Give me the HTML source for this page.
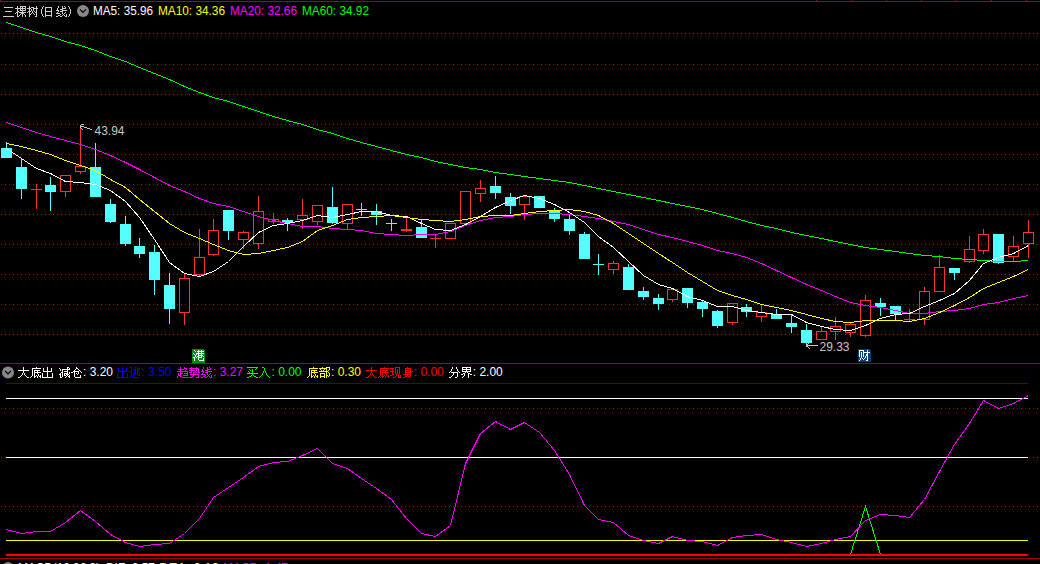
<!DOCTYPE html>
<html><head><meta charset="utf-8"><style>
html,body{margin:0;padding:0;background:#000;width:1040px;height:564px;overflow:hidden}
svg{display:block}
text{font-family:"Liberation Sans",sans-serif}
</style></head><body>
<svg width="1040" height="564" viewBox="0 0 1040 564" shape-rendering="crispEdges" font-family="Liberation Sans, sans-serif">
<rect x="0" y="0" width="1040" height="564" fill="#000"/>
<rect x="0" y="1" width="1040" height="1" fill="#b00000"/>
<rect x="0" y="0" width="1" height="2" fill="#b00000"/>
<rect x="23" y="0" width="1" height="2" fill="#b00000"/>
<rect x="816" y="0" width="1" height="2" fill="#b00000"/>
<rect x="851" y="0" width="1" height="2" fill="#b00000"/>
<rect x="886" y="0" width="1" height="2" fill="#b00000"/>
<rect x="921" y="0" width="1" height="2" fill="#b00000"/>
<rect x="956" y="0" width="1" height="2" fill="#b00000"/>
<rect x="991" y="0" width="1" height="2" fill="#b00000"/>
<rect x="1026" y="0" width="1" height="2" fill="#b00000"/>
<rect x="0" y="363" width="1040" height="1" fill="#b00000"/>
<rect x="0" y="558" width="1040" height="1" fill="#b00000"/>
<line x1="1" y1="33.5" x2="1040" y2="33.5" stroke="#c80000" stroke-width="1" stroke-dasharray="1 3"/>
<line x1="1" y1="64.5" x2="1040" y2="64.5" stroke="#c80000" stroke-width="1" stroke-dasharray="1 3"/>
<line x1="1" y1="94.5" x2="1040" y2="94.5" stroke="#c80000" stroke-width="1" stroke-dasharray="1 3"/>
<line x1="1" y1="124.5" x2="1040" y2="124.5" stroke="#c80000" stroke-width="1" stroke-dasharray="1 3"/>
<line x1="1" y1="154.5" x2="1040" y2="154.5" stroke="#c80000" stroke-width="1" stroke-dasharray="1 3"/>
<line x1="1" y1="184.5" x2="1040" y2="184.5" stroke="#c80000" stroke-width="1" stroke-dasharray="1 3"/>
<line x1="1" y1="214.5" x2="1040" y2="214.5" stroke="#c80000" stroke-width="1" stroke-dasharray="1 3"/>
<line x1="1" y1="244.5" x2="1040" y2="244.5" stroke="#c80000" stroke-width="1" stroke-dasharray="1 3"/>
<line x1="1" y1="274.5" x2="1040" y2="274.5" stroke="#c80000" stroke-width="1" stroke-dasharray="1 3"/>
<line x1="1" y1="304.5" x2="1040" y2="304.5" stroke="#c80000" stroke-width="1" stroke-dasharray="1 3"/>
<line x1="1" y1="334.5" x2="1040" y2="334.5" stroke="#c80000" stroke-width="1" stroke-dasharray="1 3"/>
<line x1="1" y1="408.5" x2="1040" y2="408.5" stroke="#c80000" stroke-width="1" stroke-dasharray="1 3"/>
<line x1="1" y1="457.5" x2="1040" y2="457.5" stroke="#c80000" stroke-width="1" stroke-dasharray="1 3"/>
<line x1="1" y1="506.5" x2="1040" y2="506.5" stroke="#c80000" stroke-width="1" stroke-dasharray="1 3"/>
<rect x="1" y="148" width="11" height="10" fill="#54ffff"/>
<rect x="6" y="142" width="1" height="6" fill="#54ffff"/>
<rect x="16" y="167" width="11" height="22" fill="#54ffff"/>
<rect x="21" y="158" width="1" height="9" fill="#54ffff"/>
<rect x="21" y="189" width="1" height="10" fill="#54ffff"/>
<rect x="31" y="189" width="11" height="1" fill="#ff3232"/>
<rect x="36" y="184" width="1" height="25" fill="#ff3232"/>
<rect x="45" y="185" width="11" height="7" fill="#54ffff"/>
<rect x="50" y="177" width="1" height="8" fill="#54ffff"/>
<rect x="50" y="192" width="1" height="19" fill="#54ffff"/>
<rect x="60.5" y="175.5" width="10" height="16" fill="none" stroke="#ff3232" stroke-width="1"/>
<rect x="65" y="192" width="1" height="5" fill="#ff3232"/>
<rect x="75.5" y="166.5" width="10" height="5" fill="none" stroke="#ff3232" stroke-width="1"/>
<rect x="80" y="125" width="1" height="41" fill="#ff3232"/>
<rect x="80" y="172" width="1" height="2" fill="#ff3232"/>
<rect x="90" y="167" width="11" height="30" fill="#54ffff"/>
<rect x="95" y="143" width="1" height="24" fill="#54ffff"/>
<rect x="105" y="204" width="11" height="18" fill="#54ffff"/>
<rect x="110" y="199" width="1" height="5" fill="#54ffff"/>
<rect x="110" y="222" width="1" height="1" fill="#54ffff"/>
<rect x="120" y="224" width="11" height="20" fill="#54ffff"/>
<rect x="125" y="216" width="1" height="8" fill="#54ffff"/>
<rect x="125" y="244" width="1" height="2" fill="#54ffff"/>
<rect x="134" y="246" width="11" height="8" fill="#54ffff"/>
<rect x="139" y="238" width="1" height="8" fill="#54ffff"/>
<rect x="139" y="254" width="1" height="4" fill="#54ffff"/>
<rect x="149" y="252" width="11" height="28" fill="#54ffff"/>
<rect x="154" y="245" width="1" height="7" fill="#54ffff"/>
<rect x="154" y="280" width="1" height="15" fill="#54ffff"/>
<rect x="164" y="285" width="11" height="24" fill="#54ffff"/>
<rect x="169" y="273" width="1" height="12" fill="#54ffff"/>
<rect x="169" y="309" width="1" height="15" fill="#54ffff"/>
<rect x="179.5" y="278.5" width="10" height="34" fill="none" stroke="#ff3232" stroke-width="1"/>
<rect x="184" y="274" width="1" height="4" fill="#ff3232"/>
<rect x="184" y="313" width="1" height="12" fill="#ff3232"/>
<rect x="194.5" y="257.5" width="10" height="17" fill="none" stroke="#ff3232" stroke-width="1"/>
<rect x="199" y="229" width="1" height="28" fill="#ff3232"/>
<rect x="199" y="275" width="1" height="2" fill="#ff3232"/>
<rect x="208.5" y="230.5" width="10" height="24" fill="none" stroke="#ff3232" stroke-width="1"/>
<rect x="213" y="219" width="1" height="11" fill="#ff3232"/>
<rect x="213" y="255" width="1" height="1" fill="#ff3232"/>
<rect x="223" y="210" width="11" height="21" fill="#54ffff"/>
<rect x="228" y="231" width="1" height="9" fill="#54ffff"/>
<rect x="238.5" y="232.5" width="10" height="7" fill="none" stroke="#ff3232" stroke-width="1"/>
<rect x="243" y="231" width="1" height="1" fill="#ff3232"/>
<rect x="243" y="240" width="1" height="9" fill="#ff3232"/>
<rect x="253.5" y="211.5" width="10" height="32" fill="none" stroke="#ff3232" stroke-width="1"/>
<rect x="258" y="196" width="1" height="15" fill="#ff3232"/>
<rect x="258" y="244" width="1" height="5" fill="#ff3232"/>
<rect x="268.5" y="219.5" width="10" height="2" fill="none" stroke="#ff3232" stroke-width="1"/>
<rect x="273" y="213" width="1" height="6" fill="#ff3232"/>
<rect x="273" y="222" width="1" height="2" fill="#ff3232"/>
<rect x="282" y="220" width="11" height="3" fill="#54ffff"/>
<rect x="287" y="218" width="1" height="2" fill="#54ffff"/>
<rect x="287" y="223" width="1" height="8" fill="#54ffff"/>
<rect x="297.5" y="215.5" width="10" height="4" fill="none" stroke="#ff3232" stroke-width="1"/>
<rect x="302" y="199" width="1" height="16" fill="#ff3232"/>
<rect x="302" y="220" width="1" height="9" fill="#ff3232"/>
<rect x="312.5" y="205.5" width="10" height="16" fill="none" stroke="#ff3232" stroke-width="1"/>
<rect x="317" y="222" width="1" height="3" fill="#ff3232"/>
<rect x="327" y="207" width="11" height="16" fill="#54ffff"/>
<rect x="332" y="187" width="1" height="20" fill="#54ffff"/>
<rect x="332" y="223" width="1" height="1" fill="#54ffff"/>
<rect x="342.5" y="204.5" width="10" height="19" fill="none" stroke="#ff3232" stroke-width="1"/>
<rect x="347" y="224" width="1" height="5" fill="#ff3232"/>
<rect x="356" y="209" width="11" height="1" fill="#54ffff"/>
<rect x="361" y="203" width="1" height="13" fill="#54ffff"/>
<rect x="371" y="211" width="11" height="4" fill="#54ffff"/>
<rect x="376" y="204" width="1" height="7" fill="#54ffff"/>
<rect x="376" y="215" width="1" height="10" fill="#54ffff"/>
<rect x="386" y="223" width="11" height="1" fill="#54ffff"/>
<rect x="391" y="219" width="1" height="12" fill="#54ffff"/>
<rect x="401.5" y="229.5" width="10" height="1" fill="none" stroke="#ff3232" stroke-width="1"/>
<rect x="406" y="218" width="1" height="11" fill="#ff3232"/>
<rect x="406" y="231" width="1" height="1" fill="#ff3232"/>
<rect x="416" y="227" width="11" height="11" fill="#54ffff"/>
<rect x="421" y="220" width="1" height="7" fill="#54ffff"/>
<rect x="430" y="238" width="11" height="1" fill="#ff3232"/>
<rect x="435" y="234" width="1" height="14" fill="#ff3232"/>
<rect x="445.5" y="223.5" width="10" height="15" fill="none" stroke="#ff3232" stroke-width="1"/>
<rect x="460.5" y="191.5" width="10" height="32" fill="none" stroke="#ff3232" stroke-width="1"/>
<rect x="465" y="224" width="1" height="1" fill="#ff3232"/>
<rect x="475.5" y="188.5" width="10" height="5" fill="none" stroke="#ff3232" stroke-width="1"/>
<rect x="480" y="180" width="1" height="8" fill="#ff3232"/>
<rect x="480" y="194" width="1" height="8" fill="#ff3232"/>
<rect x="490" y="186" width="11" height="7" fill="#54ffff"/>
<rect x="495" y="176" width="1" height="10" fill="#54ffff"/>
<rect x="495" y="193" width="1" height="6" fill="#54ffff"/>
<rect x="505" y="197" width="11" height="9" fill="#54ffff"/>
<rect x="510" y="193" width="1" height="4" fill="#54ffff"/>
<rect x="510" y="206" width="1" height="8" fill="#54ffff"/>
<rect x="519.5" y="196.5" width="10" height="8" fill="none" stroke="#ff3232" stroke-width="1"/>
<rect x="524" y="195" width="1" height="1" fill="#ff3232"/>
<rect x="524" y="205" width="1" height="15" fill="#ff3232"/>
<rect x="534" y="196" width="11" height="12" fill="#54ffff"/>
<rect x="549" y="211" width="11" height="8" fill="#54ffff"/>
<rect x="554" y="208" width="1" height="3" fill="#54ffff"/>
<rect x="554" y="219" width="1" height="3" fill="#54ffff"/>
<rect x="564" y="219" width="11" height="12" fill="#54ffff"/>
<rect x="569" y="215" width="1" height="4" fill="#54ffff"/>
<rect x="569" y="231" width="1" height="4" fill="#54ffff"/>
<rect x="579" y="234" width="11" height="25" fill="#54ffff"/>
<rect x="584" y="232" width="1" height="2" fill="#54ffff"/>
<rect x="593" y="264" width="11" height="1" fill="#54ffff"/>
<rect x="598" y="254" width="1" height="21" fill="#54ffff"/>
<rect x="608.5" y="263.5" width="10" height="6" fill="none" stroke="#ff3232" stroke-width="1"/>
<rect x="613" y="261" width="1" height="2" fill="#ff3232"/>
<rect x="613" y="270" width="1" height="4" fill="#ff3232"/>
<rect x="623" y="267" width="11" height="23" fill="#54ffff"/>
<rect x="628" y="264" width="1" height="3" fill="#54ffff"/>
<rect x="638" y="291" width="11" height="6" fill="#54ffff"/>
<rect x="643" y="287" width="1" height="4" fill="#54ffff"/>
<rect x="643" y="297" width="1" height="3" fill="#54ffff"/>
<rect x="653" y="298" width="11" height="6" fill="#54ffff"/>
<rect x="658" y="294" width="1" height="4" fill="#54ffff"/>
<rect x="658" y="304" width="1" height="6" fill="#54ffff"/>
<rect x="667.5" y="289.5" width="10" height="10" fill="none" stroke="#ff3232" stroke-width="1"/>
<rect x="672" y="288" width="1" height="1" fill="#ff3232"/>
<rect x="672" y="300" width="1" height="2" fill="#ff3232"/>
<rect x="682" y="288" width="11" height="15" fill="#54ffff"/>
<rect x="687" y="303" width="1" height="5" fill="#54ffff"/>
<rect x="697" y="302" width="11" height="7" fill="#54ffff"/>
<rect x="702" y="301" width="1" height="1" fill="#54ffff"/>
<rect x="702" y="309" width="1" height="8" fill="#54ffff"/>
<rect x="712" y="311" width="11" height="15" fill="#54ffff"/>
<rect x="717" y="310" width="1" height="1" fill="#54ffff"/>
<rect x="717" y="326" width="1" height="2" fill="#54ffff"/>
<rect x="727.5" y="303.5" width="10" height="19" fill="none" stroke="#ff3232" stroke-width="1"/>
<rect x="732" y="323" width="1" height="2" fill="#ff3232"/>
<rect x="741" y="307" width="11" height="5" fill="#54ffff"/>
<rect x="746" y="304" width="1" height="3" fill="#54ffff"/>
<rect x="746" y="312" width="1" height="5" fill="#54ffff"/>
<rect x="756.5" y="312.5" width="10" height="4" fill="none" stroke="#ff3232" stroke-width="1"/>
<rect x="761" y="305" width="1" height="7" fill="#ff3232"/>
<rect x="761" y="317" width="1" height="5" fill="#ff3232"/>
<rect x="771" y="314" width="11" height="5" fill="#54ffff"/>
<rect x="776" y="309" width="1" height="5" fill="#54ffff"/>
<rect x="786" y="323" width="11" height="4" fill="#54ffff"/>
<rect x="791" y="315" width="1" height="8" fill="#54ffff"/>
<rect x="791" y="327" width="1" height="6" fill="#54ffff"/>
<rect x="801" y="330" width="11" height="13" fill="#54ffff"/>
<rect x="806" y="324" width="1" height="6" fill="#54ffff"/>
<rect x="806" y="343" width="1" height="1" fill="#54ffff"/>
<rect x="816.5" y="331.5" width="10" height="8" fill="none" stroke="#ff3232" stroke-width="1"/>
<rect x="821" y="327" width="1" height="4" fill="#ff3232"/>
<rect x="830.5" y="326.5" width="10" height="5" fill="none" stroke="#ff3232" stroke-width="1"/>
<rect x="835" y="317" width="1" height="9" fill="#ff3232"/>
<rect x="835" y="332" width="1" height="8" fill="#ff3232"/>
<rect x="845.5" y="324.5" width="10" height="8" fill="none" stroke="#ff3232" stroke-width="1"/>
<rect x="850" y="322" width="1" height="2" fill="#ff3232"/>
<rect x="850" y="333" width="1" height="4" fill="#ff3232"/>
<rect x="860.5" y="300.5" width="10" height="35" fill="none" stroke="#ff3232" stroke-width="1"/>
<rect x="865" y="295" width="1" height="5" fill="#ff3232"/>
<rect x="865" y="336" width="1" height="1" fill="#ff3232"/>
<rect x="875" y="303" width="11" height="4" fill="#54ffff"/>
<rect x="880" y="298" width="1" height="5" fill="#54ffff"/>
<rect x="880" y="307" width="1" height="9" fill="#54ffff"/>
<rect x="890" y="306" width="11" height="8" fill="#54ffff"/>
<rect x="895" y="314" width="1" height="6" fill="#54ffff"/>
<rect x="904" y="319" width="11" height="1" fill="#ff3232"/>
<rect x="909" y="309" width="1" height="12" fill="#ff3232"/>
<rect x="919.5" y="291.5" width="10" height="28" fill="none" stroke="#ff3232" stroke-width="1"/>
<rect x="924" y="287" width="1" height="4" fill="#ff3232"/>
<rect x="924" y="320" width="1" height="5" fill="#ff3232"/>
<rect x="934.5" y="267.5" width="10" height="24" fill="none" stroke="#ff3232" stroke-width="1"/>
<rect x="939" y="255" width="1" height="12" fill="#ff3232"/>
<rect x="949" y="268" width="11" height="5" fill="#54ffff"/>
<rect x="954" y="273" width="1" height="7" fill="#54ffff"/>
<rect x="964.5" y="249.5" width="10" height="12" fill="none" stroke="#ff3232" stroke-width="1"/>
<rect x="969" y="236" width="1" height="13" fill="#ff3232"/>
<rect x="969" y="262" width="1" height="1" fill="#ff3232"/>
<rect x="978.5" y="234.5" width="10" height="16" fill="none" stroke="#ff3232" stroke-width="1"/>
<rect x="983" y="229" width="1" height="5" fill="#ff3232"/>
<rect x="983" y="251" width="1" height="3" fill="#ff3232"/>
<rect x="993" y="234" width="11" height="29" fill="#54ffff"/>
<rect x="998" y="263" width="1" height="1" fill="#54ffff"/>
<rect x="1008.5" y="246.5" width="10" height="10" fill="none" stroke="#ff3232" stroke-width="1"/>
<rect x="1013" y="236" width="1" height="10" fill="#ff3232"/>
<rect x="1013" y="257" width="1" height="4" fill="#ff3232"/>
<rect x="1023.5" y="232.5" width="10" height="11" fill="none" stroke="#ff3232" stroke-width="1"/>
<rect x="1028" y="220" width="1" height="12" fill="#ff3232"/>
<rect x="1028" y="244" width="1" height="14" fill="#ff3232"/>
<polyline fill="none" stroke="#00ff00" stroke-width="1" points="6.5,22.5 21.5,27.5 36.5,32.5 50.5,36.5 65.5,41.5 80.5,45.5 95.5,50.5 110.5,56.5 125.5,61.5 139.5,67.5 154.5,73.5 169.5,79.5 184.5,86.5 199.5,92.5 213.5,97.5 228.5,101.5 243.5,106.5 258.5,111.5 273.5,116.5 287.5,120.5 302.5,124.5 317.5,129.5 332.5,133.5 347.5,138.5 361.5,142.5 376.5,146.5 391.5,150.5 406.5,154.5 421.5,157.5 435.5,161.5 450.5,164.5 465.5,167.5 480.5,169.5 495.5,172.5 510.5,174.5 524.5,176.5 539.5,178.5 554.5,180.5 569.5,182.5 584.5,185.5 598.5,188.5 613.5,191.5 628.5,194.5 643.5,197.5 658.5,200.5 672.5,203.5 687.5,206.5 702.5,209.5 717.5,213.5 732.5,217.5 746.5,221.5 761.5,225.5 776.5,228.5 791.5,232.5 806.5,235.5 821.5,238.5 835.5,241.5 850.5,244.5 865.5,247.5 880.5,249.5 895.5,251.5 909.5,253.5 924.5,255.5 939.5,256.5 954.5,258.5 969.5,259.5 983.5,260.5 998.5,261.5 1013.5,261.5 1028.5,260.5"/>
<polyline fill="none" stroke="#ff00ff" stroke-width="1" points="6.5,122.5 21.5,127.5 36.5,132.5 50.5,136.5 65.5,140.5 80.5,144.5 95.5,149.5 110.5,155.5 125.5,162.5 139.5,169.5 154.5,177.5 169.5,185.5 184.5,191.5 199.5,198.5 213.5,203.5 228.5,206.5 243.5,211.5 258.5,216.5 273.5,220.5 287.5,223.5 302.5,226.5 317.5,226.5 332.5,228.5 347.5,229.5 361.5,230.5 376.5,233.5 391.5,234.5 406.5,235.5 421.5,234.5 435.5,234.5 450.5,231.5 465.5,225.5 480.5,220.5 495.5,217.5 510.5,216.5 524.5,214.5 539.5,213.5 554.5,213.5 569.5,214.5 584.5,216.5 598.5,218.5 613.5,221.5 628.5,224.5 643.5,229.5 658.5,234.5 672.5,237.5 687.5,241.5 702.5,245.5 717.5,250.5 732.5,253.5 746.5,257.5 761.5,263.5 776.5,270.5 791.5,277.5 806.5,284.5 821.5,290.5 835.5,296.5 850.5,302.5 865.5,305.5 880.5,307.5 895.5,310.5 909.5,313.5 924.5,313.5 939.5,311.5 954.5,310.5 969.5,308.5 983.5,304.5 998.5,302.5 1013.5,298.5 1028.5,295.5"/>
<polyline fill="none" stroke="#ffffff" stroke-width="1" points="6.5,148.5 21.5,158.5 36.5,168.5 50.5,173.5 65.5,181.5 80.5,182.5 95.5,184.5 110.5,190.5 125.5,201.5 139.5,217.5 154.5,239.5 169.5,262.5 184.5,273.5 199.5,276.5 213.5,271.5 228.5,261.5 243.5,246.5 258.5,232.5 273.5,225.5 287.5,223.5 302.5,220.5 317.5,215.5 332.5,217.5 347.5,214.5 361.5,211.5 376.5,211.5 391.5,215.5 406.5,216.5 421.5,223.5 435.5,229.5 450.5,230.5 465.5,224.5 480.5,216.5 495.5,207.5 510.5,200.5 524.5,195.5 539.5,198.5 554.5,204.5 569.5,212.5 584.5,222.5 598.5,236.5 613.5,247.5 628.5,261.5 643.5,275.5 658.5,284.5 672.5,288.5 687.5,296.5 702.5,300.5 717.5,306.5 732.5,306.5 746.5,310.5 761.5,312.5 776.5,314.5 791.5,314.5 806.5,322.5 821.5,326.5 835.5,329.5 850.5,330.5 865.5,325.5 880.5,318.5 895.5,314.5 909.5,313.5 924.5,306.5 939.5,300.5 954.5,293.5 969.5,280.5 983.5,263.5 998.5,257.5 1013.5,253.5 1028.5,245.5"/>
<polyline fill="none" stroke="#ffff00" stroke-width="1" points="6.5,143.5 21.5,146.5 36.5,150.5 50.5,154.5 65.5,160.5 80.5,165.5 95.5,170.5 110.5,179.5 125.5,187.5 139.5,199.5 154.5,211.5 169.5,223.5 184.5,232.5 199.5,238.5 213.5,244.5 228.5,250.5 243.5,254.5 258.5,253.5 273.5,250.5 287.5,247.5 302.5,241.5 317.5,230.5 332.5,225.5 347.5,219.5 361.5,217.5 376.5,216.5 391.5,215.5 406.5,217.5 421.5,219.5 435.5,220.5 450.5,221.5 465.5,219.5 480.5,216.5 495.5,215.5 510.5,215.5 524.5,213.5 539.5,211.5 554.5,210.5 569.5,209.5 584.5,211.5 598.5,215.5 613.5,223.5 628.5,233.5 643.5,243.5 658.5,253.5 672.5,262.5 687.5,272.5 702.5,281.5 717.5,290.5 732.5,295.5 746.5,299.5 761.5,304.5 776.5,307.5 791.5,310.5 806.5,314.5 821.5,318.5 835.5,321.5 850.5,322.5 865.5,320.5 880.5,320.5 895.5,320.5 909.5,321.5 924.5,318.5 939.5,312.5 954.5,305.5 969.5,297.5 983.5,288.5 998.5,282.5 1013.5,276.5 1028.5,269.5"/>
<rect x="81" y="124" width="3" height="1" fill="#c8c8c8"/>
<rect x="80" y="125" width="1" height="1" fill="#c8c8c8"/>
<rect x="80" y="126" width="4" height="1" fill="#c8c8c8"/>
<rect x="80" y="127" width="1" height="1" fill="#c8c8c8"/>
<rect x="84" y="127" width="3" height="1" fill="#c8c8c8"/>
<rect x="81" y="128" width="1" height="1" fill="#c8c8c8"/>
<rect x="87" y="128" width="3" height="1" fill="#c8c8c8"/>
<rect x="82" y="129" width="1" height="1" fill="#c8c8c8"/>
<rect x="90" y="129" width="2" height="1" fill="#c8c8c8"/>
<text x="94.5" y="135" fill="#c8c8c8" font-size="12" textLength="30" lengthAdjust="spacingAndGlyphs">43.94</text>
<rect x="808" y="343" width="1" height="1" fill="#c8c8c8"/>
<rect x="806" y="344" width="2" height="1" fill="#c8c8c8"/>
<rect x="806" y="345" width="12" height="1" fill="#c8c8c8"/>
<rect x="806" y="346" width="2" height="1" fill="#c8c8c8"/>
<rect x="808" y="347" width="1" height="1" fill="#c8c8c8"/>
<rect x="809" y="348" width="1" height="1" fill="#c8c8c8"/>
<text x="819.5" y="351" fill="#c8c8c8" font-size="12" textLength="30" lengthAdjust="spacingAndGlyphs">29.33</text>
<path fill="#008a14" d="M192,349 h11 l2,2 v12 h-13 z"/>
<path fill="#fff" d="M194 350h1v1h-1zM198 350h1v1h-1zM201 350h1v1h-1zM195 351h1v1h-1zM197 351h7v1h-7zM198 352h1v1h-1zM201 352h1v1h-1zM193 353h1v1h-1zM196 353h8v1h-8zM194 354h1v1h-1zM196 354h1v1h-1zM198 354h1v1h-1zM201 354h1v1h-1zM195 355h1v1h-1zM198 355h5v1h-5zM195 356h1v1h-1zM197 356h2v1h-2zM201 356h1v1h-1zM203 356h1v1h-1zM193 357h2v1h-2zM196 357h1v1h-1zM198 357h4v1h-4zM194 358h1v1h-1zM198 358h1v1h-1zM203 358h1v1h-1zM194 359h1v1h-1zM198 359h1v1h-1zM203 359h1v1h-1zM194 360h1v1h-1zM199 360h5v1h-5z"/>
<path fill="#0c3c7c" d="M858,349 h11 l2,2 v11 h-13 z"/>
<path fill="#fff" d="M859 350h5v1h-5zM867 350h1v1h-1zM859 351h1v1h-1zM863 351h1v1h-1zM867 351h1v1h-1zM859 352h1v1h-1zM861 352h1v1h-1zM863 352h7v1h-7zM859 353h1v1h-1zM861 353h1v1h-1zM863 353h1v1h-1zM867 353h1v1h-1zM859 354h1v1h-1zM861 354h1v1h-1zM863 354h1v1h-1zM866 354h2v1h-2zM859 355h1v1h-1zM861 355h1v1h-1zM863 355h1v1h-1zM866 355h2v1h-2zM859 356h1v1h-1zM861 356h1v1h-1zM863 356h1v1h-1zM865 356h1v1h-1zM867 356h1v1h-1zM861 357h1v1h-1zM865 357h1v1h-1zM867 357h1v1h-1zM860 358h1v1h-1zM862 358h1v1h-1zM864 358h1v1h-1zM867 358h1v1h-1zM860 359h1v1h-1zM863 359h1v1h-1zM867 359h1v1h-1zM859 360h1v1h-1zM866 360h2v1h-2z"/>
<path fill="#d0d0d0" d="M4 7h9v1h-9zM5 11h7v1h-7zM3 16h11v1h-11zM17 6h1v1h-1zM20 6h6v1h-6zM17 7h1v1h-1zM20 7h1v1h-1zM22 7h1v1h-1zM25 7h1v1h-1zM15 8h11v1h-11zM17 9h1v1h-1zM20 9h1v1h-1zM22 9h1v1h-1zM25 9h1v1h-1zM17 10h1v1h-1zM20 10h6v1h-6zM17 11h2v1h-2zM22 11h1v1h-1zM16 12h2v1h-2zM19 12h7v1h-7zM15 13h1v1h-1zM17 13h1v1h-1zM21 13h3v1h-3zM17 14h1v1h-1zM20 14h1v1h-1zM22 14h1v1h-1zM24 14h1v1h-1zM17 15h1v1h-1zM19 15h1v1h-1zM22 15h1v1h-1zM25 15h1v1h-1zM17 16h2v1h-2zM22 16h1v1h-1zM25 16h1v1h-1zM29 6h1v1h-1zM36 6h1v1h-1zM29 7h1v1h-1zM31 7h3v1h-3zM36 7h1v1h-1zM27 8h4v1h-4zM33 8h5v1h-5zM29 9h1v1h-1zM31 9h1v1h-1zM33 9h1v1h-1zM36 9h1v1h-1zM29 10h1v1h-1zM31 10h1v1h-1zM33 10h1v1h-1zM36 10h1v1h-1zM28 11h3v1h-3zM32 11h1v1h-1zM34 11h1v1h-1zM36 11h1v1h-1zM27 12h1v1h-1zM29 12h1v1h-1zM32 12h1v1h-1zM35 12h2v1h-2zM29 13h1v1h-1zM31 13h1v1h-1zM33 13h1v1h-1zM36 13h1v1h-1zM29 14h2v1h-2zM34 14h1v1h-1zM36 14h1v1h-1zM29 15h1v1h-1zM36 15h1v1h-1zM29 16h1v1h-1zM35 16h2v1h-2z"/>
<path fill="#d0d0d0" d="M43 6h1v1h-1zM42 7h1v1h-1zM42 8h1v1h-1zM41 9h1v1h-1zM41 10h1v1h-1zM41 11h1v1h-1zM41 12h1v1h-1zM41 13h1v1h-1zM42 14h1v1h-1zM42 15h1v1h-1zM43 16h1v1h-1zM45 7h7v1h-7zM45 8h1v1h-1zM51 8h1v1h-1zM45 9h1v1h-1zM51 9h1v1h-1zM45 10h1v1h-1zM51 10h1v1h-1zM45 11h7v1h-7zM45 12h1v1h-1zM51 12h1v1h-1zM45 13h1v1h-1zM51 13h1v1h-1zM45 14h1v1h-1zM51 14h1v1h-1zM45 15h7v1h-7zM45 16h1v1h-1zM51 16h1v1h-1zM58 6h1v1h-1zM62 6h1v1h-1zM64 6h1v1h-1zM58 7h1v1h-1zM62 7h1v1h-1zM65 7h1v1h-1zM57 8h1v1h-1zM62 8h4v1h-4zM57 9h1v1h-1zM60 9h3v1h-3zM56 10h3v1h-3zM62 10h5v1h-5zM58 11h1v1h-1zM60 11h3v1h-3zM57 12h1v1h-1zM62 12h1v1h-1zM65 12h1v1h-1zM56 13h4v1h-4zM62 13h1v1h-1zM64 13h1v1h-1zM60 14h1v1h-1zM63 14h1v1h-1zM66 14h1v1h-1zM58 15h2v1h-2zM62 15h1v1h-1zM64 15h1v1h-1zM66 15h1v1h-1zM56 16h2v1h-2zM60 16h2v1h-2zM65 16h2v1h-2zM68 6h1v1h-1zM69 7h1v1h-1zM69 8h1v1h-1zM70 9h1v1h-1zM70 10h1v1h-1zM70 11h1v1h-1zM70 12h1v1h-1zM70 13h1v1h-1zM69 14h1v1h-1zM69 15h1v1h-1zM68 16h1v1h-1z"/>
<circle cx="83" cy="11" r="6" fill="#888" shape-rendering="auto"/>
<path fill="none" stroke="#000" stroke-width="1.2" shape-rendering="auto" d="M80,9.3 L83,12.3 L86,9.3"/>
<text x="93" y="15" fill="#ffffff" font-size="12" textLength="60" lengthAdjust="spacingAndGlyphs">MA5: 35.96</text>
<text x="158" y="15" fill="#ffff00" font-size="12" textLength="67" lengthAdjust="spacingAndGlyphs">MA10: 34.36</text>
<text x="230" y="15" fill="#ff00ff" font-size="12" textLength="67" lengthAdjust="spacingAndGlyphs">MA20: 32.66</text>
<text x="302" y="15" fill="#00ff00" font-size="12" textLength="67" lengthAdjust="spacingAndGlyphs">MA60: 34.92</text>
<rect x="6" y="383" width="1022" height="1" fill="#0000ff"/>
<rect x="6" y="398" width="1022" height="1" fill="#ffffff"/>
<rect x="6" y="457" width="1022" height="1" fill="#ffffff"/>
<rect x="6" y="540" width="1022" height="1" fill="#ffff00"/>
<polyline fill="none" stroke="#00ff00" points="850.5,554.5 865.5,506.5 880.5,554.5"/>
<rect x="6" y="554" width="1022" height="2" fill="#ff0000"/>
<polyline fill="none" stroke="#ff00ff" stroke-width="1" points="6.5,529.5 21.5,533.5 36.5,531.5 50.5,531.5 65.5,522.5 80.5,510.5 95.5,521.5 110.5,534.5 125.5,542.5 139.5,546.5 154.5,544.5 169.5,543.5 184.5,533.5 199.5,518.5 213.5,497.5 228.5,487.5 243.5,477.5 258.5,466.5 273.5,462.5 287.5,461.5 302.5,455.5 317.5,448.5 332.5,463.5 347.5,468.5 361.5,478.5 376.5,488.5 391.5,499.5 406.5,518.5 421.5,533.5 435.5,536.5 450.5,525.5 465.5,463.5 480.5,433.5 495.5,421.5 510.5,429.5 524.5,422.5 539.5,432.5 554.5,450.5 569.5,474.5 584.5,505.5 598.5,519.5 613.5,522.5 628.5,535.5 643.5,540.5 658.5,543.5 672.5,536.5 687.5,540.5 702.5,541.5 717.5,545.5 732.5,537.5 746.5,535.5 761.5,534.5 776.5,539.5 791.5,542.5 806.5,546.5 821.5,543.5 835.5,539.5 850.5,536.5 865.5,520.5 880.5,514.5 895.5,515.5 909.5,517.5 924.5,499.5 939.5,471.5 954.5,444.5 969.5,423.5 983.5,400.5 998.5,408.5 1013.5,403.5 1028.5,395.5"/>
<circle cx="8" cy="372.5" r="6" fill="#888" shape-rendering="auto"/>
<path fill="none" stroke="#000" stroke-width="1.2" shape-rendering="auto" d="M5,370.8 L8,373.8 L11,370.8"/>
<path fill="#ffffff" d="M23 367h1v1h-1zM23 368h1v1h-1zM23 369h1v1h-1zM18 370h11v1h-11zM23 371h1v1h-1zM23 372h1v1h-1zM22 373h1v1h-1zM24 373h1v1h-1zM22 374h1v1h-1zM24 374h1v1h-1zM21 375h1v1h-1zM25 375h1v1h-1zM20 376h1v1h-1zM26 376h1v1h-1zM18 377h2v1h-2zM27 377h2v1h-2zM36 367h1v1h-1zM32 368h9v1h-9zM32 369h1v1h-1zM32 370h1v1h-1zM34 370h6v1h-6zM32 371h1v1h-1zM34 371h1v1h-1zM37 371h1v1h-1zM32 372h1v1h-1zM34 372h7v1h-7zM32 373h1v1h-1zM34 373h1v1h-1zM37 373h1v1h-1zM32 374h1v1h-1zM34 374h1v1h-1zM38 374h1v1h-1zM32 375h1v1h-1zM34 375h1v1h-1zM36 375h1v1h-1zM38 375h1v1h-1zM40 375h1v1h-1zM31 376h1v1h-1zM34 376h2v1h-2zM37 376h1v1h-1zM39 376h2v1h-2zM30 377h1v1h-1zM34 377h1v1h-1zM37 377h1v1h-1zM40 377h1v1h-1zM47 367h1v1h-1zM43 368h1v1h-1zM47 368h1v1h-1zM51 368h1v1h-1zM43 369h1v1h-1zM47 369h1v1h-1zM51 369h1v1h-1zM43 370h1v1h-1zM47 370h1v1h-1zM51 370h1v1h-1zM43 371h9v1h-9zM47 372h1v1h-1zM42 373h1v1h-1zM47 373h1v1h-1zM52 373h1v1h-1zM42 374h1v1h-1zM47 374h1v1h-1zM52 374h1v1h-1zM42 375h1v1h-1zM47 375h1v1h-1zM52 375h1v1h-1zM42 376h1v1h-1zM47 376h1v1h-1zM52 376h1v1h-1zM42 377h11v1h-11z"/>
<path fill="#ffffff" d="M67 367h2v1h-2zM59 368h1v1h-1zM67 368h1v1h-1zM69 368h1v1h-1zM60 369h1v1h-1zM62 369h8v1h-8zM60 370h1v1h-1zM62 370h1v1h-1zM67 370h1v1h-1zM62 371h1v1h-1zM64 371h4v1h-4zM61 372h2v1h-2zM67 372h1v1h-1zM69 372h1v1h-1zM60 373h1v1h-1zM62 373h1v1h-1zM64 373h4v1h-4zM69 373h1v1h-1zM59 374h2v1h-2zM62 374h1v1h-1zM64 374h1v1h-1zM66 374h3v1h-3zM60 375h1v1h-1zM62 375h1v1h-1zM64 375h2v1h-2zM67 375h1v1h-1zM69 375h1v1h-1zM60 376h1v1h-1zM62 376h1v1h-1zM66 376h1v1h-1zM68 376h2v1h-2zM60 377h2v1h-2zM65 377h1v1h-1zM69 377h1v1h-1zM76 367h1v1h-1zM76 368h2v1h-2zM75 369h1v1h-1zM78 369h1v1h-1zM74 370h1v1h-1zM79 370h1v1h-1zM73 371h6v1h-6zM80 371h1v1h-1zM71 372h2v1h-2zM74 372h1v1h-1zM78 372h1v1h-1zM81 372h1v1h-1zM74 373h1v1h-1zM76 373h1v1h-1zM78 373h1v1h-1zM74 374h1v1h-1zM77 374h1v1h-1zM74 375h1v1h-1zM80 375h1v1h-1zM74 376h1v1h-1zM80 376h1v1h-1zM75 377h6v1h-6z"/>
<text x="83" y="376" fill="#ffffff" font-size="12" textLength="30" lengthAdjust="spacingAndGlyphs">: 3.20</text>
<path fill="#0000ff" d="M122 367h1v1h-1zM118 368h1v1h-1zM122 368h1v1h-1zM126 368h1v1h-1zM118 369h1v1h-1zM122 369h1v1h-1zM126 369h1v1h-1zM118 370h1v1h-1zM122 370h1v1h-1zM126 370h1v1h-1zM118 371h9v1h-9zM122 372h1v1h-1zM117 373h1v1h-1zM122 373h1v1h-1zM127 373h1v1h-1zM117 374h1v1h-1zM122 374h1v1h-1zM127 374h1v1h-1zM117 375h1v1h-1zM122 375h1v1h-1zM127 375h1v1h-1zM117 376h1v1h-1zM122 376h1v1h-1zM127 376h1v1h-1zM117 377h11v1h-11zM130 367h1v1h-1zM135 367h1v1h-1zM137 367h1v1h-1zM131 368h1v1h-1zM135 368h1v1h-1zM137 368h1v1h-1zM139 368h1v1h-1zM131 369h1v1h-1zM133 369h1v1h-1zM135 369h1v1h-1zM137 369h2v1h-2zM134 370h2v1h-2zM137 370h1v1h-1zM129 371h3v1h-3zM135 371h1v1h-1zM137 371h2v1h-2zM131 372h1v1h-1zM134 372h2v1h-2zM137 372h1v1h-1zM139 372h1v1h-1zM131 373h1v1h-1zM133 373h1v1h-1zM135 373h1v1h-1zM137 373h1v1h-1zM131 374h1v1h-1zM134 374h1v1h-1zM137 374h1v1h-1zM139 374h1v1h-1zM131 375h1v1h-1zM133 375h1v1h-1zM138 375h2v1h-2zM130 376h1v1h-1zM132 376h1v1h-1zM129 377h1v1h-1zM133 377h7v1h-7z"/>
<text x="141.5" y="376" fill="#0000ff" font-size="12" textLength="30" lengthAdjust="spacingAndGlyphs">: 3.50</text>
<path fill="#ff00ff" d="M180 367h1v1h-1zM184 367h1v1h-1zM180 368h1v1h-1zM184 368h3v1h-3zM178 369h6v1h-6zM186 369h1v1h-1zM180 370h1v1h-1zM185 370h1v1h-1zM177 371h11v1h-11zM180 372h1v1h-1zM187 372h1v1h-1zM178 373h1v1h-1zM180 373h3v1h-3zM184 373h4v1h-4zM178 374h1v1h-1zM180 374h1v1h-1zM187 374h1v1h-1zM178 375h3v1h-3zM183 375h5v1h-5zM177 376h1v1h-1zM180 376h2v1h-2zM177 377h1v1h-1zM182 377h6v1h-6zM191 367h1v1h-1zM196 367h1v1h-1zM189 368h10v1h-10zM191 369h1v1h-1zM196 369h1v1h-1zM198 369h1v1h-1zM189 370h6v1h-6zM196 370h1v1h-1zM198 370h1v1h-1zM191 371h1v1h-1zM195 371h1v1h-1zM198 371h1v1h-1zM189 372h3v1h-3zM193 372h2v1h-2zM196 372h1v1h-1zM198 372h2v1h-2zM193 373h1v1h-1zM190 374h9v1h-9zM193 375h1v1h-1zM198 375h1v1h-1zM192 376h1v1h-1zM198 376h1v1h-1zM189 377h3v1h-3zM196 377h3v1h-3zM203 367h1v1h-1zM207 367h1v1h-1zM209 367h1v1h-1zM203 368h1v1h-1zM207 368h1v1h-1zM210 368h1v1h-1zM202 369h1v1h-1zM207 369h4v1h-4zM202 370h1v1h-1zM205 370h3v1h-3zM201 371h3v1h-3zM207 371h5v1h-5zM203 372h1v1h-1zM205 372h3v1h-3zM202 373h1v1h-1zM207 373h1v1h-1zM210 373h1v1h-1zM201 374h4v1h-4zM207 374h1v1h-1zM209 374h1v1h-1zM205 375h1v1h-1zM208 375h1v1h-1zM211 375h1v1h-1zM203 376h2v1h-2zM207 376h1v1h-1zM209 376h1v1h-1zM211 376h1v1h-1zM201 377h2v1h-2zM205 377h2v1h-2zM210 377h2v1h-2z"/>
<text x="213" y="376" fill="#ff00ff" font-size="12" textLength="30" lengthAdjust="spacingAndGlyphs">: 3.27</text>
<path fill="#00ff00" d="M247 367h11v1h-11zM256 368h1v1h-1zM249 369h1v1h-1zM252 369h1v1h-1zM255 369h1v1h-1zM250 370h1v1h-1zM252 370h1v1h-1zM248 371h1v1h-1zM252 371h1v1h-1zM249 372h1v1h-1zM252 372h1v1h-1zM247 373h11v1h-11zM252 374h1v1h-1zM251 375h1v1h-1zM253 375h1v1h-1zM249 376h2v1h-2zM254 376h2v1h-2zM247 377h2v1h-2zM256 377h2v1h-2zM262 367h2v1h-2zM264 368h1v1h-1zM264 369h1v1h-1zM264 370h1v1h-1zM263 371h1v1h-1zM265 371h1v1h-1zM263 372h1v1h-1zM265 372h1v1h-1zM262 373h1v1h-1zM266 373h1v1h-1zM262 374h1v1h-1zM266 374h1v1h-1zM261 375h1v1h-1zM267 375h1v1h-1zM260 376h1v1h-1zM268 376h1v1h-1zM259 377h1v1h-1zM269 377h1v1h-1z"/>
<text x="271.5" y="376" fill="#00ff00" font-size="12" textLength="30" lengthAdjust="spacingAndGlyphs">: 0.00</text>
<path fill="#ffff00" d="M313 367h1v1h-1zM309 368h9v1h-9zM309 369h1v1h-1zM309 370h1v1h-1zM311 370h6v1h-6zM309 371h1v1h-1zM311 371h1v1h-1zM314 371h1v1h-1zM309 372h1v1h-1zM311 372h7v1h-7zM309 373h1v1h-1zM311 373h1v1h-1zM314 373h1v1h-1zM309 374h1v1h-1zM311 374h1v1h-1zM315 374h1v1h-1zM309 375h1v1h-1zM311 375h1v1h-1zM313 375h1v1h-1zM315 375h1v1h-1zM317 375h1v1h-1zM308 376h1v1h-1zM311 376h2v1h-2zM314 376h1v1h-1zM316 376h2v1h-2zM307 377h1v1h-1zM311 377h1v1h-1zM314 377h1v1h-1zM317 377h1v1h-1zM322 367h1v1h-1zM326 367h4v1h-4zM319 368h8v1h-8zM329 368h1v1h-1zM320 369h1v1h-1zM324 369h1v1h-1zM326 369h1v1h-1zM329 369h1v1h-1zM321 370h1v1h-1zM323 370h1v1h-1zM326 370h1v1h-1zM328 370h1v1h-1zM319 371h9v1h-9zM326 372h1v1h-1zM328 372h1v1h-1zM320 373h5v1h-5zM326 373h1v1h-1zM329 373h1v1h-1zM320 374h1v1h-1zM324 374h1v1h-1zM326 374h1v1h-1zM329 374h1v1h-1zM320 375h1v1h-1zM324 375h1v1h-1zM326 375h2v1h-2zM329 375h1v1h-1zM320 376h5v1h-5zM326 376h1v1h-1zM328 376h1v1h-1zM320 377h1v1h-1zM324 377h1v1h-1zM326 377h1v1h-1z"/>
<text x="331" y="376" fill="#ffff00" font-size="12" textLength="30" lengthAdjust="spacingAndGlyphs">: 0.30</text>
<path fill="#ff0000" d="M371 367h1v1h-1zM371 368h1v1h-1zM371 369h1v1h-1zM366 370h11v1h-11zM371 371h1v1h-1zM371 372h1v1h-1zM370 373h1v1h-1zM372 373h1v1h-1zM370 374h1v1h-1zM372 374h1v1h-1zM369 375h1v1h-1zM373 375h1v1h-1zM368 376h1v1h-1zM374 376h1v1h-1zM366 377h2v1h-2zM375 377h2v1h-2zM384 367h1v1h-1zM380 368h9v1h-9zM380 369h1v1h-1zM380 370h1v1h-1zM382 370h6v1h-6zM380 371h1v1h-1zM382 371h1v1h-1zM385 371h1v1h-1zM380 372h1v1h-1zM382 372h7v1h-7zM380 373h1v1h-1zM382 373h1v1h-1zM385 373h1v1h-1zM380 374h1v1h-1zM382 374h1v1h-1zM386 374h1v1h-1zM380 375h1v1h-1zM382 375h1v1h-1zM384 375h1v1h-1zM386 375h1v1h-1zM388 375h1v1h-1zM379 376h1v1h-1zM382 376h2v1h-2zM385 376h1v1h-1zM387 376h2v1h-2zM378 377h1v1h-1zM382 377h1v1h-1zM385 377h1v1h-1zM388 377h1v1h-1zM395 367h5v1h-5zM390 368h4v1h-4zM395 368h1v1h-1zM399 368h1v1h-1zM392 369h1v1h-1zM395 369h1v1h-1zM397 369h1v1h-1zM399 369h1v1h-1zM392 370h1v1h-1zM395 370h1v1h-1zM397 370h1v1h-1zM399 370h1v1h-1zM390 371h4v1h-4zM395 371h1v1h-1zM397 371h1v1h-1zM399 371h1v1h-1zM392 372h1v1h-1zM395 372h1v1h-1zM397 372h1v1h-1zM399 372h1v1h-1zM392 373h1v1h-1zM395 373h1v1h-1zM397 373h1v1h-1zM399 373h1v1h-1zM392 374h2v1h-2zM396 374h1v1h-1zM398 374h1v1h-1zM390 375h2v1h-2zM396 375h1v1h-1zM398 375h1v1h-1zM400 375h1v1h-1zM395 376h1v1h-1zM398 376h1v1h-1zM400 376h1v1h-1zM393 377h2v1h-2zM398 377h3v1h-3zM407 367h1v1h-1zM405 368h6v1h-6zM405 369h1v1h-1zM410 369h1v1h-1zM405 370h6v1h-6zM405 371h1v1h-1zM410 371h1v1h-1zM412 371h1v1h-1zM405 372h7v1h-7zM405 373h1v1h-1zM410 373h1v1h-1zM403 374h8v1h-8zM407 375h1v1h-1zM410 375h1v1h-1zM405 376h2v1h-2zM408 376h1v1h-1zM410 376h1v1h-1zM403 377h2v1h-2zM409 377h1v1h-1z"/>
<text x="413.75" y="376" fill="#ff0000" font-size="12" textLength="30" lengthAdjust="spacingAndGlyphs">: 0.00</text>
<path fill="#ffffff" d="M452 367h1v1h-1zM456 367h1v1h-1zM452 368h1v1h-1zM456 368h1v1h-1zM451 369h1v1h-1zM457 369h1v1h-1zM451 370h1v1h-1zM457 370h1v1h-1zM450 371h1v1h-1zM458 371h1v1h-1zM449 372h1v1h-1zM451 372h7v1h-7zM459 372h1v1h-1zM453 373h1v1h-1zM457 373h1v1h-1zM453 374h1v1h-1zM457 374h1v1h-1zM452 375h1v1h-1zM457 375h1v1h-1zM451 376h1v1h-1zM457 376h1v1h-1zM449 377h2v1h-2zM455 377h2v1h-2zM462 367h9v1h-9zM462 368h1v1h-1zM466 368h1v1h-1zM470 368h1v1h-1zM462 369h9v1h-9zM462 370h1v1h-1zM466 370h1v1h-1zM470 370h1v1h-1zM462 371h9v1h-9zM465 372h1v1h-1zM467 372h1v1h-1zM463 373h2v1h-2zM468 373h2v1h-2zM461 374h2v1h-2zM464 374h1v1h-1zM468 374h1v1h-1zM470 374h2v1h-2zM464 375h1v1h-1zM468 375h1v1h-1zM463 376h1v1h-1zM468 376h1v1h-1zM462 377h1v1h-1zM468 377h1v1h-1z"/>
<text x="472.75" y="376" fill="#ffffff" font-size="12" textLength="30" lengthAdjust="spacingAndGlyphs">: 2.00</text>
<circle cx="8" cy="568" r="6" fill="#888" shape-rendering="auto"/>
<text x="18" y="572" fill="#ffffff" font-size="12" textLength="82" lengthAdjust="spacingAndGlyphs">MACD(12,26,9)</text>
<text x="106" y="572" fill="#ffffff" font-size="12" textLength="49" lengthAdjust="spacingAndGlyphs">DIF: 0.57</text>
<text x="159" y="572" fill="#ffff00" font-size="12" textLength="60" lengthAdjust="spacingAndGlyphs">DEA: 0.13</text>
<text x="223" y="572" fill="#ff00ff" font-size="12" textLength="65" lengthAdjust="spacingAndGlyphs">MACD: 1.47</text>
</svg>
</body></html>
